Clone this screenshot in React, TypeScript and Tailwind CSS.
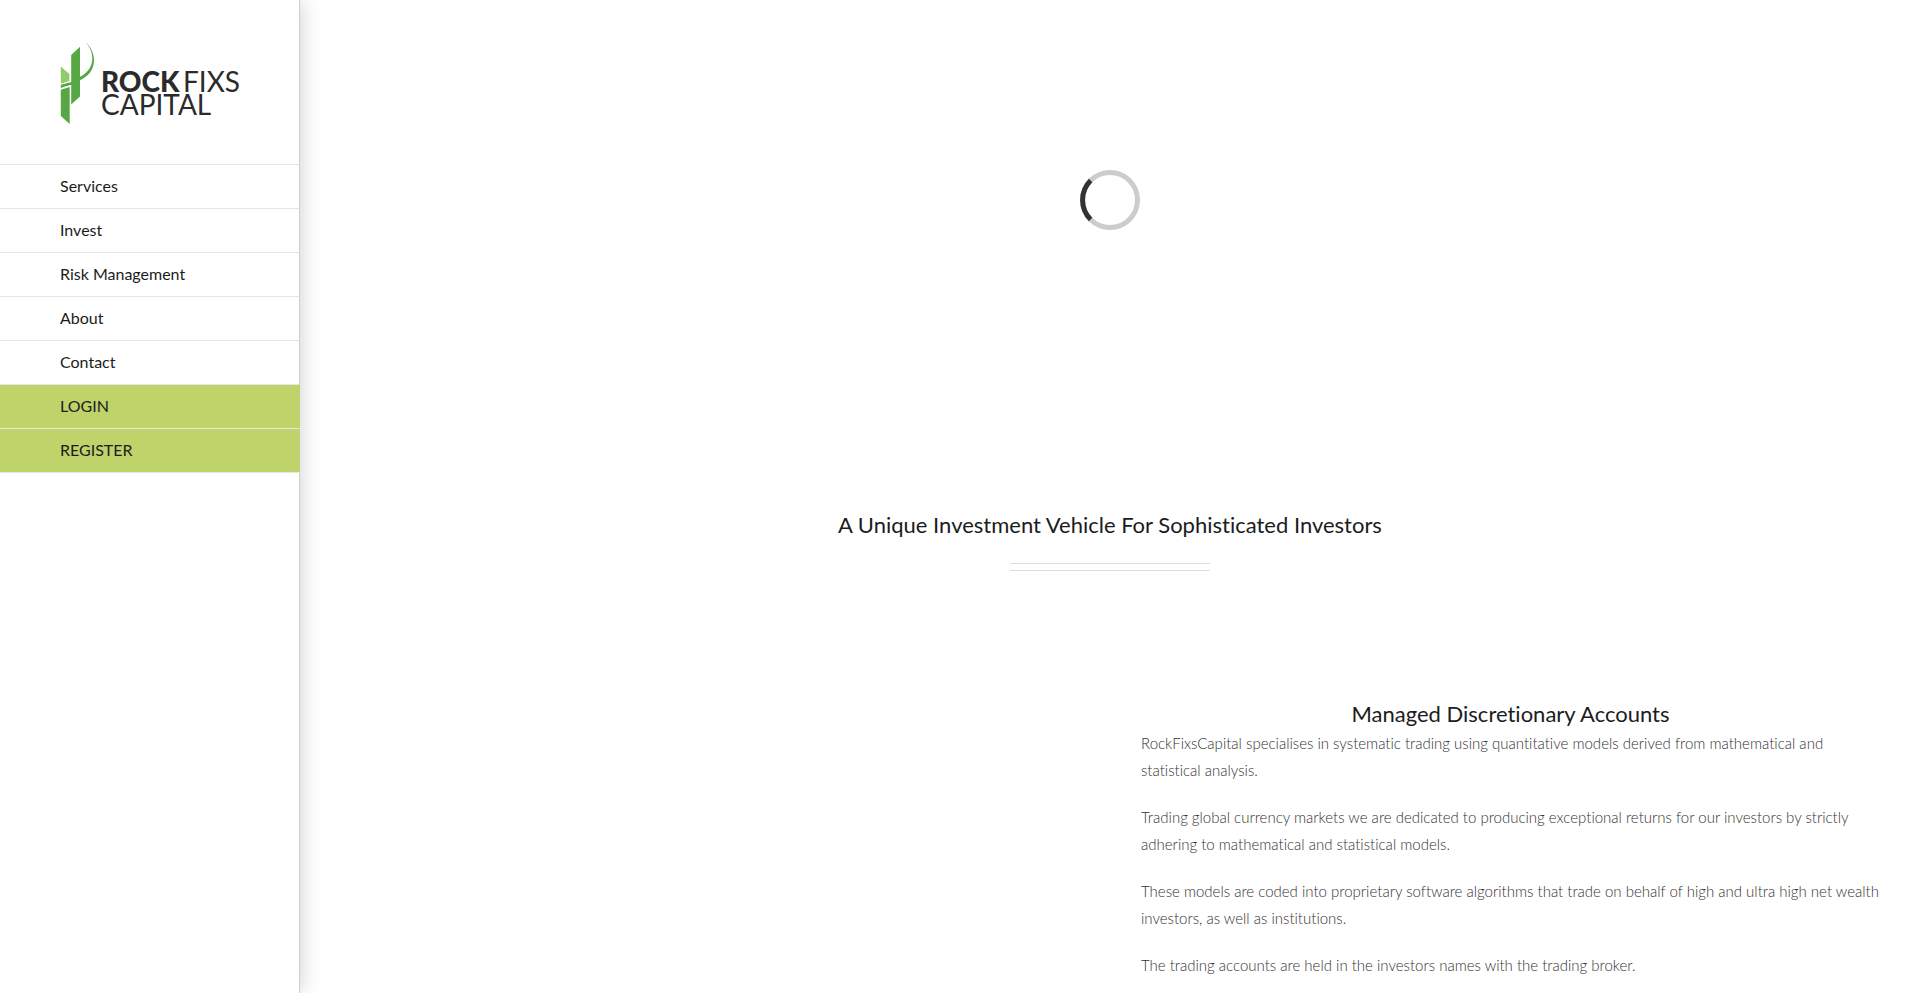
const navItems = [
  { label: "Services", href: "#services" },
  { label: "Invest", href: "#invest" },
  { label: "Risk Management", href: "#risk-management" },
  { label: "About", href: "#about" },
  { label: "Contact", href: "#contact" },
];

const accountItems = [
  { label: "LOGIN", href: "#login" },
  { label: "REGISTER", href: "#register" },
];

const paragraphs = [
  "RockFixsCapital specialises in systematic trading using quantitative models derived from mathematical and statistical analysis.",
  "Trading global currency markets we are dedicated to producing exceptional returns for our investors by strictly adhering to mathematical and statistical models.",
  "These models are coded into proprietary software algorithms that trade on behalf of high and ultra high net wealth investors, as well as institutions.",
  "The trading accounts are held in the investors names with the trading broker.",
];

function Logo() {
  return (
    <svg
      viewBox="0 0 184 84"
      className="h-[84px] w-[184px] max-w-none"
      role="img"
      aria-label="Rockfixs Capital"
    >
      <path d="M0.8 24.5 L9.4 32 V39 L0.8 42 Z" fill="#8fcc6c" />
      <path d="M11.2 13 L20 4.8 V54.5 L11.2 62.5 Z" fill="#57a744" />
      <path d="M0.8 47.8 L9.7 45 V82 L0.8 74 Z" fill="#57a744" />
      <path d="M0.8 42.6 C7 40.5 14 40 20 36.5 V39.5 C14 43 7 43.5 0.8 46 Z" fill="#57a744" />
      <path
        d="M25.3 0 C37 10 38.5 30 20 38.2 V34.8 C34 28 36.5 12 25.3 0 Z"
        fill="#57a744"
      />
      <path
        d="M0.8 42.4 C5 40.8 8 40.4 11.2 39.6 M0.8 46.9 C5 45 8 44.4 11.2 43.6"
        stroke="#fff"
        strokeWidth="1"
        fill="none"
      />
      <text fill="#2b2b2b" fontFamily="Lato, sans-serif" fontSize="28" fontWeight="400">
        <tspan x="41" y="50" fontWeight="900">ROCK</tspan>
        <tspan x="123" y="50">FIXS</tspan>
        <tspan x="41" y="73">CAPITAL</tspan>
      </text>
    </svg>
  );
}

function Sidebar() {
  const row = "flex h-11 items-center border-b border-[#e5e5e5] pb-0.5 pl-[60px] text-base text-[#1c1c1c]";
  return (
    <aside className="relative w-[300px] shrink-0 border-r border-[#cfcfcf] bg-white shadow-[0_0_20px_rgba(0,0,0,0.2)]">
      <a href="#home" className="block pt-[42px] pb-[38px] pl-[60px]">
        <Logo />
      </a>
      <nav className="border-t border-[#e5e5e5]">
        <ul>
          {navItems.map((item) => (
            <li key={item.label}>
              <a href={item.href} className={row}>
                {item.label}
              </a>
            </li>
          ))}
          {accountItems.map((item) => (
            <li key={item.label} className="-mr-px bg-[#bed369]">
              <a href={item.href} className={row}>
                {item.label}
              </a>
            </li>
          ))}
        </ul>
      </nav>
    </aside>
  );
}

function Spinner() {
  return (
    <svg viewBox="0 0 60 60" className="size-[60px]" role="status" aria-label="Loading" fill="none" strokeWidth="5">
      <circle cx="30" cy="30" r="27.5" stroke="#cccccc" />
      <path d="M10.6 49.4 A27.5 27.5 0 0 1 10.6 10.6" stroke="#333333" />
    </svg>
  );
}

export default function App() {
  return (
    <div className="flex min-h-screen bg-white font-['Lato',sans-serif] [font-variant-ligatures:none]">
      <Sidebar />
      <main className="min-w-0 flex-1 px-10">
        <div className="flex h-[400px] items-center justify-center">
          <Spinner />
        </div>
        <section className="flex flex-col items-center pt-[109px]">
          <h1 className="text-center text-[22px] leading-8 text-[#1c1c1c]">
            A Unique Investment Vehicle For Sophisticated Investors
          </h1>
          <div className="mt-[22px] h-2 w-[200px] border-y border-[#dddddd]" />
        </section>
        <section className="grid grid-cols-2 gap-x-[62px] pt-[127px]">
          <div className="col-start-2">
            <h2 className="text-center text-[22px] leading-8 text-[#1c1c1c]">Managed Discretionary Accounts</h2>
            <div className="flex flex-col gap-5 text-[15px] leading-[27px] font-light text-[#333333]">
              {paragraphs.map((text) => (
                <p key={text}>{text}</p>
              ))}
            </div>
          </div>
        </section>
      </main>
    </div>
  );
}
